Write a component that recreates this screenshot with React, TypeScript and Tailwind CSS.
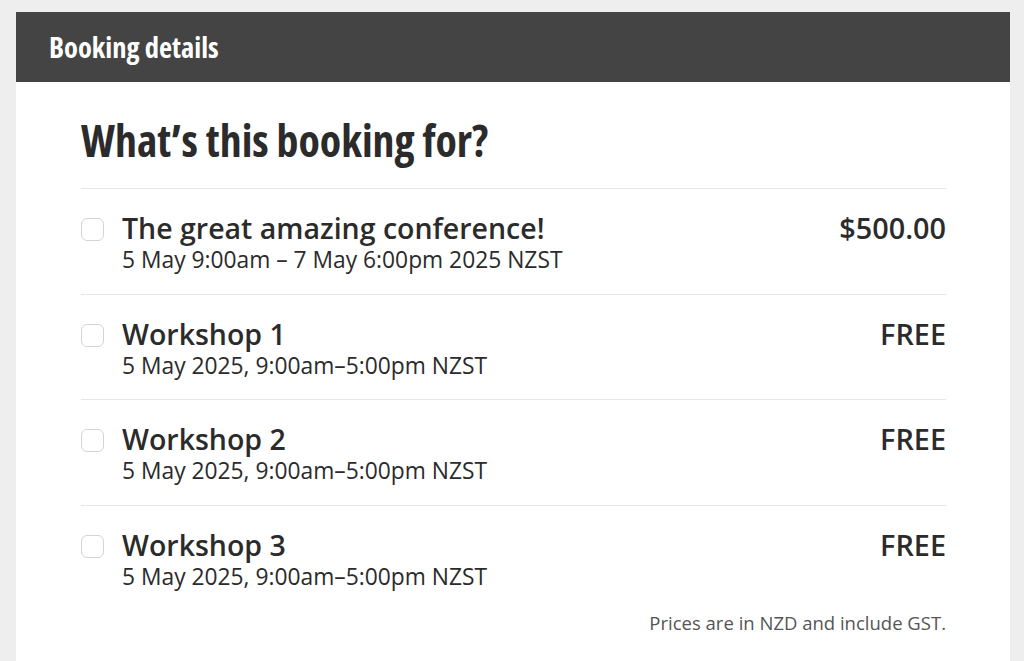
import React from "react";

// ── Data ─────────────────────────────────────────────────────

interface BookingItem {
  title: string;
  when: string;
  price: string;
}

const items: BookingItem[] = [
  {
    title: "The great amazing conference!",
    when: "5 May 9:00am – 7 May 6:00pm 2025 NZST",
    price: "$500.00",
  },
  { title: "Workshop 1", when: "5 May 2025, 9:00am–5:00pm NZST", price: "FREE" },
  { title: "Workshop 2", when: "5 May 2025, 9:00am–5:00pm NZST", price: "FREE" },
  { title: "Workshop 3", when: "5 May 2025, 9:00am–5:00pm NZST", price: "FREE" },
];

const condensed = {
  fontFamily: '"Open Sans", "DejaVu Sans Condensed", sans-serif',
  fontStretch: "75%",
} as const;

// ── Components ───────────────────────────────────────────────

function BookingRow({ item }: { item: BookingItem }) {
  return (
    <label className="flex items-start gap-[18px] border-t border-[#e6e6e6] pt-[21px] pb-[19.5px]">
      <span className="mt-[8px] h-[23px] w-[23px] shrink-0 rounded-[6px] border border-[#d4d4d4] bg-white" />
      <span className="min-w-0 flex-1">
        <span className="block text-[28.5px] leading-[36px] font-semibold text-[#2b2b2b]">
          {item.title}
        </span>
        <span className="block text-[22.8px] leading-[28px] text-[#2b2b2b]">{item.when}</span>
      </span>
      <span className="text-[28.8px] leading-[36px] font-semibold text-[#2b2b2b]">{item.price}</span>
    </label>
  );
}

export default function App() {
  return (
    <div
      className="min-h-[661px] bg-[#eeeeee] pt-[12px] pl-[16px] pr-[14px]"
      style={{ fontFamily: '"Open Sans", sans-serif' }}
    >
      <div className="bg-white">
        <div className="flex h-[70px] items-center bg-[#444444] px-[33px]">
          <h2
            className="text-[28.5px] font-bold text-white leading-none"
            style={condensed}
          >
            Booking details
          </h2>
        </div>
        <div className="pl-[65px] pr-[64px] pt-[34px] pb-[30px]">
          <h1
            className="mb-[24px] text-[43.8px] leading-[48px] font-bold text-[#2b2b2b]"
            style={condensed}
          >
            What’s this booking for?
          </h1>
          {items.map((item) => (
            <BookingRow key={item.title} item={item} />
          ))}
          <p className="text-right text-[18.5px] leading-[25px] text-[#555555]">
            Prices are in NZD and include GST.
          </p>
        </div>
      </div>
    </div>
  );
}
